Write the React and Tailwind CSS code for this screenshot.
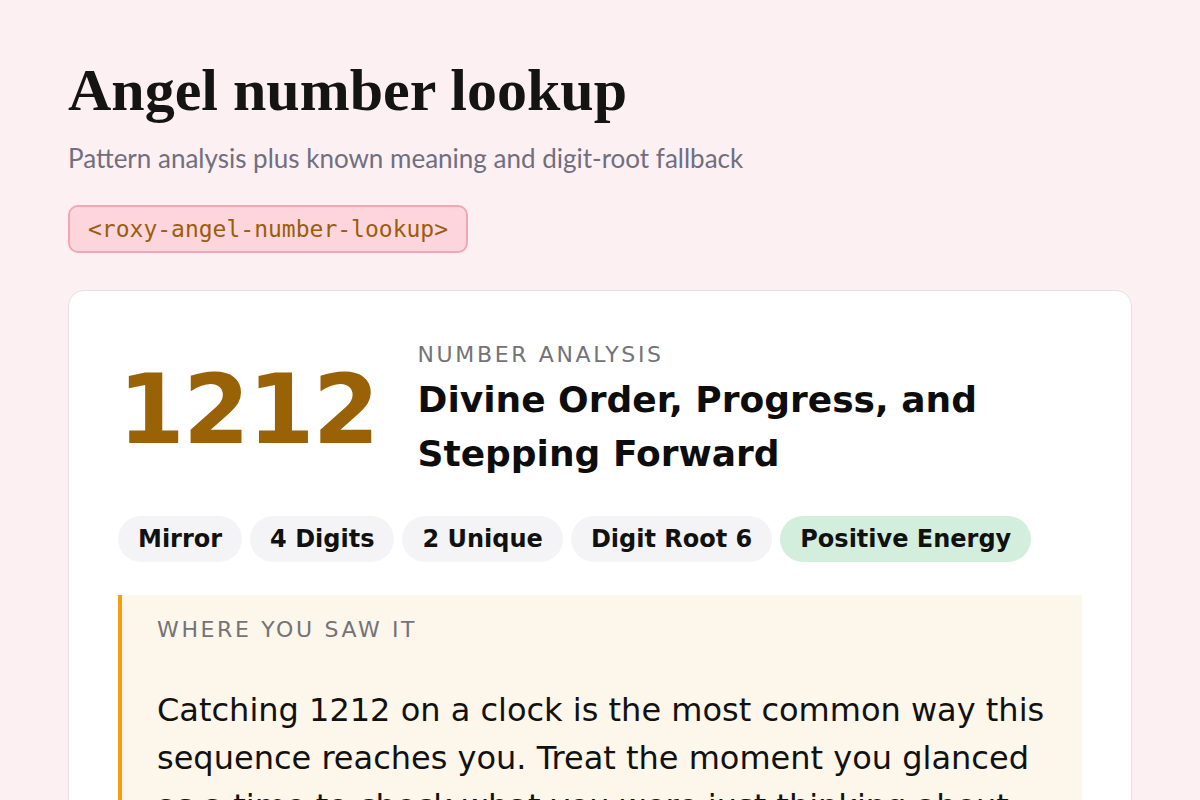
export default function App() {
  const chips = [
    { label: 'Mirror', tone: 'bg-[#f4f4f6]' },
    { label: '4 Digits', tone: 'bg-[#f4f4f6]' },
    { label: '2 Unique', tone: 'bg-[#f4f4f6]' },
    { label: 'Digit Root 6', tone: 'bg-[#f4f4f6]' },
    { label: 'Positive Energy', tone: 'bg-[#d4eedd]' },
  ];

  return (
    <div className="min-h-screen bg-[#fdf0f3] px-[68px] pt-[56px] font-['DejaVu_Sans',sans-serif] text-[#111]">
      <h1 className="font-['Liberation_Serif',serif] text-[60px] font-bold leading-[1.15] text-[#141414]">
        Angel number lookup
      </h1>
      <p className="mt-[15px] font-['Lato',sans-serif] text-[26px] leading-[1.4] text-[#6f6f80]">
        Pattern analysis plus known meaning and digit-root fallback
      </p>
      <div className="mt-[29px]">
        <span className="inline-block rounded-[10px] border-2 border-[#f2a7b6] bg-[#fdd6dd] px-[18px] py-[5px] font-['DejaVu_Sans_Mono',monospace] text-[23px] leading-[34px] text-[#9a5d0c]">
          {'<roxy-angel-number-lookup>'}
        </span>
      </div>

      {/* Card */}
      <div className="mt-[37px] rounded-2xl border border-[#e6e1e3] bg-white px-[49px] pt-[47px] pb-10">
        <div className="flex items-center gap-[40px]">
          <div className="text-[96px] font-bold leading-none tracking-[-0.02em] text-[#9a6207]">1212</div>
          <div className="flex-1">
            <div className="text-[22px] leading-[33px] tracking-[0.12em] text-[#737378]">NUMBER ANALYSIS</div>
            <h2 className="mt-[2px] text-[36px] font-bold leading-[54px] text-[#0d0d0d]">
              Divine Order, Progress, and Stepping Forward
            </h2>
          </div>
        </div>

        <div className="mt-[35px] flex flex-wrap gap-[8px]">
          {chips.map((c) => (
            <span key={c.label} className={`h-[46px] rounded-full px-[20px] text-[24px] font-bold leading-[47px] text-[#111] ${c.tone}`}>
              {c.label}
            </span>
          ))}
        </div>

        <div className="mt-[33px] border-l-4 border-[#f59e0b] bg-[#fdf6eb] pl-[35px] pr-8 pt-[18px] pb-10">
          <div className="text-[22px] leading-[33px] tracking-[0.12em] text-[#737378]">WHERE YOU SAW IT</div>
          <p className="mt-[40px] text-[32px] leading-[48px] text-[#111]">
            Catching 1212 on a clock is the most common way this sequence reaches you. Treat the moment you glanced
            as a time to check what you were just thinking about, because that thought is the one the number points to.
          </p>
        </div>
      </div>
    </div>
  );
}
